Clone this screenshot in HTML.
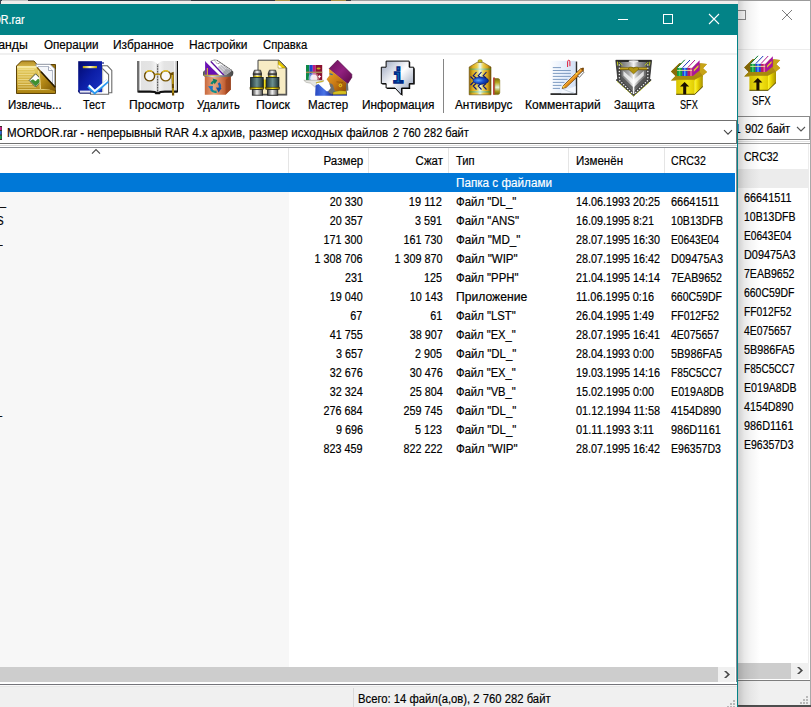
<!DOCTYPE html>
<html lang="ru">
<head>
<meta charset="utf-8">
<title>MORDOR.rar - WinRAR</title>
<style>
html,body{margin:0;padding:0}
body{width:811px;height:707px;overflow:hidden;position:relative;background:#fff;font:12px/14px 'Liberation Sans',sans-serif;color:#000}
div,svg{position:absolute;box-sizing:border-box}
.t{position:absolute;white-space:pre;font-size:12px;line-height:14px;display:block;-webkit-text-stroke-width:.18px}
#back{left:738px;top:0;width:73px;height:707px;background:#fff;overflow:hidden}
#back .t{margin-left:-738px}
#front{left:0;top:0;width:738px;height:707px;overflow:hidden}
#shadow{left:738px;top:1px;width:22px;height:705px;background:linear-gradient(90deg,rgba(0,0,0,.19),rgba(0,0,0,.09) 28%,rgba(0,0,0,.04) 58%,rgba(0,0,0,0))}
</style>
</head>
<body>
<!-- ================= background (inactive) WinRAR window ================= -->
<div id="back">
  <div style="left:0;top:0;width:73px;height:1px;background:#9b9b9b"></div>
  <div style="left:72px;top:0;width:1px;height:706px;background:#a8a8a8"></div>
  <!-- caption buttons -->
  <div style="left:-3px;top:10px;width:11px;height:10px;border:1px solid #8c8c8c"></div>
  <svg style="left:43px;top:9px" width="12" height="12" viewBox="0 0 12 12"><path d="M1 1L11 11M11 1L1 11" stroke="#7d7d7d" stroke-width="1" fill="none"/></svg>
  <div style="left:0;top:49px;width:72px;height:1px;background:#ededed"></div>
  <!-- address combo -->
  <div style="left:-4px;top:116px;width:76px;height:24px;border:1px solid #8a8a8a;background:#fff"></div>
  <svg style="left:58px;top:126px" width="10" height="6" viewBox="0 0 10 6"><path d="M1 1L5 5L9 1" stroke="#555" stroke-width="1.1" fill="none"/></svg>
  <div style="left:0;top:141px;width:72px;height:1px;background:#e2e2e2"></div>
  <div style="left:0;top:143px;width:72px;height:1px;background:#a6a6a6"></div>
  <!-- list -->
  <div style="left:0;top:169px;width:71px;height:19px;background:#ececec"></div>
  <div style="left:70px;top:144px;width:1px;height:519px;background:#ececec"></div>
  <!-- h scrollbar -->
  <div style="left:0;top:663px;width:71px;height:16px;background:#f0f0f0"></div>
  <div style="left:0;top:663px;width:53px;height:16px;background:#cdcdcd"></div>
  <svg style="left:57px;top:665px" width="10" height="12" viewBox="0 0 10 12"><path d="M2 2H4.2L8 5.5L4.2 9H2L5.6 5.5Z" fill="#484848"/></svg>
  <div style="left:0;top:680px;width:72px;height:1px;background:#7e7e7e"></div>
  <div style="left:0;top:681px;width:72px;height:24px;background:#f0f0f0"></div>
  <svg style="left:62px;top:696px" width="9" height="9" viewBox="0 0 9 9" fill="#b9b9b9"><rect x="6" y="0" width="2" height="2"/><rect x="3" y="3" width="2" height="2"/><rect x="6" y="3" width="2" height="2"/><rect x="0" y="6" width="2" height="2"/><rect x="3" y="6" width="2" height="2"/><rect x="6" y="6" width="2" height="2"/></svg>
  <div style="left:0;top:705px;width:73px;height:2px;background:#4e4e4e"></div>
<svg style="left:0;top:51px" width="73" height="45" viewBox="664.8 55 73 45"><g>
      <path d="M671 71.4 L679.4 63.2 L700.5 63.2 L707 64 L703 68.2 L707 72 L702.8 75.4 L694.8 80 L676.2 80 L671 80.4 L675.5 76 Z" fill="#b08c10"/>
      <path d="M671 71.4 L679.4 63.2 L684 63.2 L676.5 75.9 L675.5 76 Z" fill="#8a6c08"/>
      <path d="M700.5 63.4 L707 64 L703 68.2 L707 72 L702.8 75.4 L699.8 72 Z" fill="#c8a418"/>
      <!-- books -->
      <path d="M677.2 67.9 L684.8 59.8 L699.6 60.2 L692.2 67.9 Z" fill="#fff"/>
      <path d="M677.4 67.6 L684.8 59.8" stroke="#0a7a30" stroke-width="1"/>
      <path d="M682.6 67.6 L690 60" stroke="#1a38b8" stroke-width="1"/>
      <path d="M687.8 67.6 L695 60" stroke="#b0188a" stroke-width="1"/>
      <rect x="677.1" y="67.9" width="5.2" height="8.4" fill="#0c9a40"/>
      <rect x="678.8" y="67.9" width="1.6" height="8.4" fill="#50e080" opacity=".7"/>
      <rect x="682.3" y="67.9" width="5.4" height="8.4" fill="#2838e0"/>
      <rect x="684" y="67.9" width="1.6" height="8.4" fill="#40c8f8" opacity=".8"/>
      <rect x="687.7" y="67.9" width="4.5" height="8.4" fill="#b81868"/>
      <rect x="690.4" y="67.9" width="1.2" height="8.4" fill="#ff90d0" opacity=".8"/>
      <path d="M677.1 70.4 H692.2" stroke="#f0e8a0" stroke-width=".9"/>
      <path d="M692.2 67.9 L699.6 60.2 L699.6 70.4 L692.2 76.4 Z" fill="#a8149c"/>
      <path d="M693.8 69.8 L698.4 65 L698.4 67 L693.8 71.8 Z" fill="#e8d020"/>
      <!-- box -->
      <path d="M671 80.4 L675.5 75.9 L694.8 75.9 L702.8 75.2 L702.8 76.4 L694.8 80.6 Z" fill="#a88a0c"/>
      <rect x="676.2" y="79.8" width="18.6" height="14.8" fill="url(#gBoxF)"/>
      <path d="M694.8 79.8 L702.8 75.4 L702.8 86.8 L694.8 94.6 Z" fill="url(#gBoxS)"/>
      <path d="M676.2 94.3 H694.8 L702.8 86.6" fill="none" stroke="#4a3c00" stroke-width=".9"/>
      <path d="M684.6 82 L689.2 86.6 L686.2 86.6 L686.2 94.2 L683.2 94.2 L683.2 86.6 L680 86.6 Z" fill="#1a0e00"/>
    </g></svg>
<span class="t" style="left:752.2px;transform-origin:0 0;top:94.1px;transform:scaleX(0.8054)">SFX</span>
<span class="t" style="left:744.5px;transform-origin:0 0;top:121.5px;transform:scaleX(0.9257)">902 байт</span>
<span class="t" style="right:70.2px;transform-origin:100% 0;top:121.5px;transform:scaleX(0.9300)">1</span>
<span class="t" style="left:744.4px;transform-origin:0 0;top:150.0px;transform:scaleX(0.8740)">CRC32</span>
<span class="t" style="left:744.2px;transform-origin:0 0;top:191.1px;transform:scaleX(0.9048)">66641511</span>
<span class="t" style="left:744.2px;transform-origin:0 0;top:210.1px;transform:scaleX(0.8773)">10B13DFB</span>
<span class="t" style="left:744.2px;transform-origin:0 0;top:229.1px;transform:scaleX(0.8473)">E0643E04</span>
<span class="t" style="left:744.2px;transform-origin:0 0;top:248.1px;transform:scaleX(0.9080)">D09475A3</span>
<span class="t" style="left:744.2px;transform-origin:0 0;top:267.1px;transform:scaleX(0.8799)">7EAB9652</span>
<span class="t" style="left:744.2px;transform-origin:0 0;top:286.1px;transform:scaleX(0.8702)">660C59DF</span>
<span class="t" style="left:744.2px;transform-origin:0 0;top:305.1px;transform:scaleX(0.8580)">FF012F52</span>
<span class="t" style="left:744.2px;transform-origin:0 0;top:324.1px;transform:scaleX(0.8678)">4E075657</span>
<span class="t" style="left:744.2px;transform-origin:0 0;top:343.1px;transform:scaleX(0.9010)">5B986FA5</span>
<span class="t" style="left:744.2px;transform-origin:0 0;top:362.1px;transform:scaleX(0.8412)">F85C5CC7</span>
<span class="t" style="left:744.2px;transform-origin:0 0;top:381.1px;transform:scaleX(0.8842)">E019A8DB</span>
<span class="t" style="left:744.2px;transform-origin:0 0;top:400.1px;transform:scaleX(0.8937)">4154D890</span>
<span class="t" style="left:744.2px;transform-origin:0 0;top:419.1px;transform:scaleX(0.9083)">986D1161</span>
<span class="t" style="left:744.2px;transform-origin:0 0;top:438.1px;transform:scaleX(0.8727)">E96357D3</span>
</div>
<div id="shadow"></div>

<!-- ================= active WinRAR window ================= -->
<div id="front">
  <!-- strip of desktop above the window -->
  <div style="left:0;top:0;width:738px;height:1px;background:linear-gradient(90deg,#39424e 0,#39424e 2px,#c4c4c4 2px,#c4c4c4 28px,#2c2f38 28px,#2c2f38 170px,#85868c 170px,#85868c 191px,#30323a 191px,#30323a 275px,#a88c44 275px,#a88c44 290px,#2e3038 290px,#2e3038 331px,#a88c44 331px,#a88c44 346px,#34363c 346px,#34363c 351px,#a0a0a0 351px,#a0a0a0 100%)"></div>
  <div style="left:0;top:1px;width:738px;height:3px;background:#efeeec"></div>
  <div style="left:0;top:0;width:1px;height:4px;background:#3a4450"></div>
  <!-- title bar -->
  <div style="left:0;top:4px;width:738px;height:31px;background:#038387"></div>
  <svg style="left:600px;top:4px" width="138" height="31" viewBox="0 0 138 31" fill="none" stroke="#fff" stroke-width="1">
    <path d="M18 15.5H28"/><rect x="63.5" y="10.5" width="9" height="9"/><path d="M109 10L119 20M119 10L109 20" stroke-width="1.1"/>
  </svg>
  <!-- menu bar -->
  <div style="left:0;top:35px;width:737px;height:19px;background:#fff"></div>
  <div style="left:0;top:53px;width:737px;height:2px;background:#f0f0f0"></div>
  <!-- toolbar -->
  <div style="left:0;top:55px;width:737px;height:65px;background:#fff"></div>
  <div style="left:443px;top:59px;width:1px;height:54px;background:#858585"></div>
  <svg style="left:0;top:55px" width="738" height="45" viewBox="0 55 738 45">
    <defs>
      <linearGradient id="gFold" x1="0" y1="0" x2="0" y2="1"><stop offset="0" stop-color="#f6e89a"/><stop offset=".12" stop-color="#e2c85c"/><stop offset=".6" stop-color="#d2b040"/><stop offset="1" stop-color="#a9800f"/></linearGradient>
      <linearGradient id="gFoldTab" x1="0" y1="0" x2="0" y2="1"><stop offset="0" stop-color="#b8922a"/><stop offset="1" stop-color="#d8b848"/></linearGradient>
      <linearGradient id="gPeel" x1="0" y1="0" x2="1" y2="1"><stop offset="0" stop-color="#dcbc4c"/><stop offset=".45" stop-color="#b88c18"/><stop offset="1" stop-color="#7a5604"/></linearGradient>
      <linearGradient id="gBook" x1="0" y1="0" x2="1" y2="1"><stop offset="0" stop-color="#020a6e"/><stop offset=".5" stop-color="#0c1ea6"/><stop offset="1" stop-color="#1a34c4"/></linearGradient>
      <linearGradient id="gYbar" x1="0" y1="0" x2="1" y2="0"><stop offset="0" stop-color="#b8a000"/><stop offset=".5" stop-color="#fff8c0"/><stop offset="1" stop-color="#b8a000"/></linearGradient>
      <linearGradient id="gPageL" x1="0" y1="0" x2="1" y2="0"><stop offset="0" stop-color="#e2e2e2"/><stop offset=".6" stop-color="#e4e4e4"/><stop offset=".88" stop-color="#f2f2f2"/><stop offset="1" stop-color="#c8c8c8"/></linearGradient>
      <linearGradient id="gPageR" x1="0" y1="0" x2="1" y2="0"><stop offset="0" stop-color="#c8c8c8"/><stop offset=".12" stop-color="#f2f2f2"/><stop offset=".4" stop-color="#e4e4e4"/><stop offset="1" stop-color="#e2e2e2"/></linearGradient>
      <linearGradient id="gBin" x1="0" y1="0" x2="1" y2="0"><stop offset="0" stop-color="#c8683c"/><stop offset=".35" stop-color="#e9a882"/><stop offset=".8" stop-color="#c05c30"/><stop offset="1" stop-color="#8e3c18"/></linearGradient>
      <linearGradient id="gRim" x1="0" y1="0" x2="1" y2="0"><stop offset="0" stop-color="#4e4e4e"/><stop offset=".3" stop-color="#d8d8d8"/><stop offset=".6" stop-color="#8a8a8a"/><stop offset="1" stop-color="#444"/></linearGradient>
      <linearGradient id="gSilverH" x1="0" y1="0" x2="1" y2="0"><stop offset="0" stop-color="#3c3c3c"/><stop offset=".45" stop-color="#f4f4f4"/><stop offset="1" stop-color="#4a4a4a"/></linearGradient>
      <linearGradient id="gBino" x1="0" y1="0" x2="1" y2="0"><stop offset="0" stop-color="#22363a"/><stop offset=".5" stop-color="#6c9090"/><stop offset="1" stop-color="#1e3032"/></linearGradient>
      <linearGradient id="gRing" x1="0" y1="0" x2="1" y2="0"><stop offset="0" stop-color="#7a6400"/><stop offset=".5" stop-color="#ffee20"/><stop offset="1" stop-color="#7a6400"/></linearGradient>
      <linearGradient id="gBubble" x1="0" y1="0" x2="1" y2="1"><stop offset="0" stop-color="#98a2b8"/><stop offset=".22" stop-color="#c8cedc"/><stop offset=".48" stop-color="#fff"/><stop offset=".75" stop-color="#bcc4d4"/><stop offset="1" stop-color="#7c88a4"/></linearGradient>
      <linearGradient id="gInfo" x1="0" y1="0" x2="1" y2="0"><stop offset="0" stop-color="#002a8c"/><stop offset=".3" stop-color="#003a9c"/><stop offset=".5" stop-color="#168ac8"/><stop offset=".7" stop-color="#003a9c"/><stop offset="1" stop-color="#00247a"/></linearGradient>
      <linearGradient id="gCan" x1="0" y1="0" x2="1" y2="0"><stop offset="0" stop-color="#946808"/><stop offset=".16" stop-color="#dcac1c"/><stop offset=".36" stop-color="#ecd050"/><stop offset=".5" stop-color="#e4fafa"/><stop offset=".64" stop-color="#ecd050"/><stop offset=".84" stop-color="#d4a018"/><stop offset="1" stop-color="#765004"/></linearGradient>
      <linearGradient id="gCanG" x1="0" y1="0" x2="1" y2="0"><stop offset="0" stop-color="#6a8a10"/><stop offset=".5" stop-color="#c8f0e0"/><stop offset="1" stop-color="#5a7a08"/></linearGradient>
      <linearGradient id="gCap" x1="0" y1="0" x2="0" y2="1"><stop offset="0" stop-color="#7a6a08"/><stop offset=".25" stop-color="#b8a820"/><stop offset=".55" stop-color="#e4f6dc"/><stop offset=".8" stop-color="#a89818"/><stop offset="1" stop-color="#6a5c04"/></linearGradient>
      <radialGradient id="gBug" cx=".35" cy=".45" r=".7"><stop offset="0" stop-color="#58a8ff"/><stop offset=".5" stop-color="#1448c8"/><stop offset="1" stop-color="#06207a"/></radialGradient>
      <linearGradient id="gNote" x1="0" y1="0" x2="1" y2="0"><stop offset="0" stop-color="#fff"/><stop offset=".5" stop-color="#e8f0fc"/><stop offset="1" stop-color="#d2e0f6"/></linearGradient>
      <linearGradient id="gShield" x1="0" y1="0" x2="1" y2="0"><stop offset="0" stop-color="#747474"/><stop offset=".3" stop-color="#a8a8a8"/><stop offset=".5" stop-color="#f4f4f4"/><stop offset=".7" stop-color="#9c9c9c"/><stop offset="1" stop-color="#686868"/></linearGradient>
      <linearGradient id="gTurban" x1="0" y1="0" x2="1" y2="1"><stop offset="0" stop-color="#6a1058"/><stop offset=".5" stop-color="#922080"/><stop offset="1" stop-color="#5a0848"/></linearGradient>
      <linearGradient id="gFace" x1="0" y1="0" x2="1" y2="1"><stop offset="0" stop-color="#eca830"/><stop offset=".5" stop-color="#cc7c14"/><stop offset="1" stop-color="#8c4804"/></linearGradient>
      <linearGradient id="gArm" x1="0" y1="0" x2="1" y2="0"><stop offset="0" stop-color="#2848c0"/><stop offset=".5" stop-color="#4a74e8"/><stop offset="1" stop-color="#10208a"/></linearGradient>
      <linearGradient id="gBoxF" x1="0" y1="0" x2="1" y2="0"><stop offset="0" stop-color="#d8c400"/><stop offset=".6" stop-color="#f2e418"/><stop offset="1" stop-color="#e0cc00"/></linearGradient>
      <linearGradient id="gBoxS" x1="0" y1="0" x2="1" y2="0"><stop offset="0" stop-color="#fff830"/><stop offset=".4" stop-color="#e4d000"/><stop offset="1" stop-color="#a89000"/></linearGradient>
    </defs>

    <!-- 1: Extract -->
    <g>
      <path d="M16.5 67 L16.5 66 L21.5 61 L34 61 L37 64.5 L55.5 64.5 L55.5 93.5 L16.5 93.5 Z" fill="#9a7410" stroke="#5e4408" stroke-width="1"/>
      <path d="M17 66.3 L21.7 61.5 L33.8 61.5 L36.5 64.8 L36.5 67 L17 67 Z" fill="url(#gFoldTab)"/>
      <path d="M36 64.3 L50 64.3 L54.8 69 L54.8 90 L36 90 Z" fill="#fff" stroke="#8d96aa" stroke-width=".9"/>
      <path d="M38 66.5 L48.5 66.5 L52.5 70.5 L52.5 88 L38 88 Z" fill="#f4f6fa" stroke="#a0a8ba" stroke-width=".8"/>
      <path d="M48.5 66.5 L48.5 70.5 L52.5 70.5" fill="#fff" stroke="#8d96aa" stroke-width=".8"/>
      <path d="M17 66.6 L36.3 66.6 L55 87 L55 93 L17 93 Z" fill="url(#gFold)"/>
      <g stroke="#f2e29a" stroke-width=".9" opacity=".8"><path d="M18 69.5H34M18 72H35M18 74.5H33M18 77H31M18 79.5H30M18 82H30M18 84.5H32M18 87H36M18 89.5H50"/></g>
      <path d="M35.6 73.8 L42.2 80.4 L35.6 87 L29.2 80.4 Z" fill="#fff" stroke="#3c4a3c" stroke-width=".9"/>
      <path d="M30.2 80.8 L33 79.3 L35.5 81.3 L38 78.8 L41.4 80.4 L35.6 86.3 Z" fill="#3f9030"/>
      <path d="M36.3 66.6 L55 87 L55 91.2 C50 89.6 45 88.6 40.4 89.2 C40.2 82 39.6 73 36.3 66.6 Z" fill="url(#gPeel)"/>
      <path d="M38.4 70.5 C39.8 76 40.2 83 40.4 89" stroke="#f6e9a8" stroke-width="1" fill="none" opacity=".9"/>
      <path d="M37 67.4 L55.2 87.3" stroke="#7a5808" stroke-width="1.2" fill="none"/>
      <path d="M41 71.8 L55.2 87.3" stroke="#241800" stroke-width="1.5" fill="none"/>
      <path d="M17 66.9H36" stroke="#fff6c0" stroke-width="1"/>
    </g>

    <!-- 2: Test -->
    <g>
      <path d="M102 65.8 L107.5 65.8 L111.8 70.5 L111.8 92.8 L102 92.8 Z" fill="#fff" stroke="#6a6a6a" stroke-width="1.1"/>
      <path d="M103 64 L103 62" stroke="#0a1480" stroke-width="1.2"/>
      <path d="M90.5 69 L103 69 L108.6 74.5 L108.6 94.3 L90.5 94.3 Z" fill="#fff" stroke="#6a6a6a" stroke-width="1.1"/>
      <path d="M102.5 69.5 L102.5 92" stroke="#9a9a9a" stroke-width="1.4" opacity=".6"/>
      <rect x="78.2" y="61.2" width="23.8" height="31" fill="url(#gBook)"/>
      <path d="M79.8 90.6 L90.4 90.6 L90.4 92.6 L79.8 92.6 Z" fill="#e8e8f4"/>
      <path d="M78.4 90.4 L79.6 93.2 L90.4 93.2" fill="none" stroke="#060c60" stroke-width="1"/>
      <rect x="82.8" y="66" width="14.2" height="2.2" fill="url(#gYbar)"/>
      <path d="M88.5 86 L94.7 92.3 L107.8 80.8" fill="none" stroke="#2a9af0" stroke-width="3.6" stroke-linejoin="miter"/>
      <path d="M88.9 85.2 L94.8 91 L107.3 80.2" fill="none" stroke="#fff" stroke-width="1.9"/>
    </g>

    <!-- 3: View -->
    <g>
      <path d="M138 61 L138 92 L150 92 C154 92 155.5 93 155.8 93.6 L159.4 93.6 C159.8 93 161.5 92 165 92 L177.4 92 L177.4 61" fill="#fff" stroke="#111" stroke-width="1.2"/>
      <path d="M139.6 61 V91 M175.9 61 V91" stroke="#8c8c8c" stroke-width=".6"/>
      <path d="M141 61 L152 61 C155 61.5 157 63 157.6 65 L157.6 92 C156 91 153 90.6 150 90.6 L141 90.6 Z" fill="url(#gPageL)"/>
      <path d="M174.4 61 L163 61 C160 61.5 158.2 63 157.6 65 L157.6 92 C159 91 162 90.6 165 90.6 L174.4 90.6 Z" fill="url(#gPageR)"/>
      <path d="M138.3 91.4 L150 91.4 C154 91.4 156 92 156.2 92.8 L159 92.8 C159.2 92 161.5 91.4 165 91.4 L177 91.4" fill="none" stroke="#111" stroke-width="2"/>
      <path d="M157.6 64.5V92" stroke="#555" stroke-width="1.2" stroke-dasharray="1 .6"/>
      <circle cx="149.6" cy="75.9" r="5" fill="#f8f8f8" stroke="#6a4a04" stroke-width="1.4"/>
      <circle cx="165.7" cy="75.9" r="5" fill="#f8f8f8" stroke="#7a5806" stroke-width="1.4"/>
      <path d="M146 72.4 A5 5 0 0 1 152.4 71.8 M162.2 72.4 A5 5 0 0 1 168.6 71.8" fill="none" stroke="#e8c41c" stroke-width="1.2"/>
      <path d="M154.6 74.8 Q157.6 73.4 160.8 74.8" fill="none" stroke="#b08a0a" stroke-width="1.5"/>
      <path d="M170.4 74.2 L172.6 73.4 L173.1 95.6" fill="none" stroke="#6e4e02" stroke-width="2.2"/>
      <path d="M172.6 75 L172.9 84 M173 88 L173.1 93" fill="none" stroke="#e8c41c" stroke-width=".9"/>
    </g>

    <!-- 4: Delete -->
    <g>
      <path d="M203 73.4 C203 70.6 206 69.6 209 69.4 L228 69.2 C231.4 69.4 233.2 70.8 233.2 72.8 L233.2 74 C233 75.6 231.6 76.6 230 76.8 L206 76.8 C204 76.6 203 75.4 203 73.4 Z" fill="url(#gRim)"/>
      <path d="M204.8 75.5 L230.8 75.5 L230.8 89.5 L225.6 94.8 L204.8 94.8 Z" fill="url(#gBin)"/>
      <path d="M230.8 76 L230.8 89.5 L225.6 94.8 L225.6 80 Z" fill="#9c4420" opacity=".75"/>
      <path d="M205.1 61.1 L205.1 75.2 L219.2 75.2 Z" fill="#6a10b4"/>
      <path d="M207.3 68 L207.3 75" stroke="#e8d020" stroke-width="1"/>
      <path d="M210.6 61.2 L214.6 59.8 L217 60.3 L232 70.5 L224.5 76 L210.6 61.2 Z" fill="#fff" stroke="#666" stroke-width=".6"/>
      <path d="M214.5 60.5 L217.5 64 L221 62.5" fill="none" stroke="#555" stroke-width=".7" stroke-dasharray="1 .7"/>
      <path d="M220.5 64.5 L231.6 70.6 L225 75.6 L217.5 67.5 Z" fill="#d6d6da"/>
      <path d="M226 69 L231.8 70.6 L225.2 75.8 L222.4 73 Z" fill="#a9a9ae"/>
      <path d="M219 66.5 L226.5 74 M221 65.5 L228.5 72.8 M223 64.8 L230 71.5" stroke="#8e8e9a" stroke-width=".6"/>
      <path d="M217 60.3 L232 70.5" stroke="#444" stroke-width=".8" stroke-dasharray="1.2 .9"/>
      <path d="M205.6 61.4 L210.8 61.5 L224.6 76 L219.6 75.4 Z" fill="#fff"/>
      <path d="M210.8 61.5 L224.6 76" stroke="#5a0ea0" stroke-width="1.2"/>
      <path d="M203 73 C203.4 71.2 204.6 70.6 205.3 70.6 L205.3 75.2 L224.2 75.2 C228 75 231.5 73 233 70.8 C233.6 72.6 233.2 75.4 231 76.6 C225 77.6 210 77.6 204.8 76.6 C203.4 76 202.8 74.6 203 73 Z" fill="url(#gRim)"/>
      <path d="M204 75.2H219" stroke="#d8c020" stroke-width=".8"/>
      <g fill="none" stroke-width="2.3">
        <path d="M211.4 84 A5 5 0 0 1 216.4 81.2" stroke="#0e8a72"/>
        <path d="M218.6 83 A5.2 5.2 0 0 1 218.8 89.6" stroke="#1465b4"/>
        <path d="M216.6 91.6 A5.2 5.2 0 0 1 211 89.4" stroke="#0f8f8a"/>
      </g>
      <path d="M212.6 78.4 L217.4 80 L214.6 84.4 Z" fill="#0c7a5e"/>
      <path d="M216 87.4 L221.6 88 L218.6 92.6 Z" fill="#10509c"/>
      <path d="M208 86.2 L213 86 L212.2 91.4 Z" fill="#1a78c8"/>
    </g>

    <!-- 5: Find -->
    <g>
      <path d="M258 60.2 L279 60.2 L286.4 67.5 L286.4 94.6 L258 94.6 Z" fill="#f7ecc4" stroke="#444" stroke-width="1"/>
      <path d="M286.4 68 L286.4 94.6 L262 94.6" fill="none" stroke="#555" stroke-width="1.6"/>
      <path d="M278.2 60.5 L286 68 L278.2 68 Z" fill="#f0d000" stroke="#5a4a00" stroke-width=".5"/>
      <path d="M278.4 64.5 L278.4 67.8 L282 67.8 Z" fill="#fff"/>
      <rect x="263" y="79.5" width="3.4" height="9" fill="url(#gRing)"/>
      <!-- left barrel -->
      <path d="M254.4 70.2 H260.6 L261.4 72.8 V76.6 H253.4 V72.8 Z" fill="url(#gSilverH)" stroke="#1c1c1c" stroke-width=".7"/>
      <rect x="252.8" y="73.2" width="9.2" height="1.8" fill="#2a2a2a" opacity=".8"/>
      <rect x="253" y="75.8" width="8.8" height="1.8" fill="url(#gRing)"/>
      <rect x="250.6" y="77.4" width="12.6" height="10.4" fill="url(#gBino)" stroke="#101a1c" stroke-width=".8"/>
      <rect x="250" y="87.2" width="13.6" height="2.3" fill="url(#gRing)" stroke="#2a2200" stroke-width=".5"/>
      <rect x="252.3" y="89.6" width="10.2" height="5.6" fill="url(#gSilverH)" stroke="#1c1c1c" stroke-width=".8"/>
      <!-- right barrel -->
      <path d="M269.4 70.2 H275.6 L276.4 72.8 V76.6 H268.4 V72.8 Z" fill="url(#gSilverH)" stroke="#1c1c1c" stroke-width=".7"/>
      <rect x="267.8" y="73.2" width="9.2" height="1.8" fill="#2a2a2a" opacity=".8"/>
      <rect x="268.2" y="75.8" width="8.4" height="1.8" fill="url(#gRing)"/>
      <rect x="266.3" y="77.4" width="12.6" height="10.4" fill="url(#gBino)" stroke="#101a1c" stroke-width=".8"/>
      <rect x="265.8" y="87.2" width="13.6" height="2.3" fill="url(#gRing)" stroke="#2a2200" stroke-width=".5"/>
      <rect x="267.6" y="89.6" width="10.2" height="5.6" fill="url(#gSilverH)" stroke="#1c1c1c" stroke-width=".8"/>
    </g>

    <!-- 6: Wizard -->
    <g>
      <rect x="306" y="65" width="3.4" height="15.2" fill="#0c8a48"/>
      <rect x="309.4" y="65" width="3.4" height="15.2" fill="#1c44c8"/>
      <rect x="312.8" y="65" width="2.6" height="15.2" fill="#c01884"/>
      <rect x="315.4" y="65" width="6.8" height="15.2" fill="#8a1030"/>
      <rect x="306" y="71.6" width="16.2" height="1.5" fill="#a88858"/>
      <ellipse cx="318.6" cy="68.5" rx="2" ry=".9" fill="#c8b020"/>
      <circle cx="313.8" cy="78.2" r="3.6" fill="#fff" opacity=".85"/>
      <circle cx="313.8" cy="78.2" r="5.5" fill="#fff" opacity=".35"/>
      <path d="M319.6 74.8 L320.2 76 L321.4 76.6 L320.2 77.2 L319.6 78.4 L319 77.2 L317.8 76.6 L319 76 Z" fill="#fff"/>
      <path d="M303.8 80.3 L323.8 80.3 L322.5 82 L316 82.6 L317.8 86.5 L314.5 86.8 L310.5 83.2 L306 82.3 Z" fill="#e4e4e0" stroke="#9a9a90" stroke-width=".5"/>
      <path d="M316 82.2 L323.6 80.6 L323.6 81.6 L316.4 83.2 Z" fill="#c8b428"/>
      <path d="M315.2 94.5 L315.6 85.5 L318.4 84 L326.5 91.2 L333 91.2 L333 95.7 L315.2 95.7 Z" fill="url(#gArm)"/>
      <path d="M333 91.4 L347 91.4 L347 95.7 L333 95.7 Z" fill="#2038b0"/>
      <path d="M329 68.8 L337.6 60.1 L351.8 74.3 L351.8 77.4 L347.7 83.8 Z" fill="url(#gTurban)" stroke="#4a0a40" stroke-width=".6"/>
      <path d="M329 68.8 L347.5 83.8 L345.8 91.2 L333.4 91.2 L330.6 86.8 L329.7 83.6 L326.6 79.2 L329.4 75.6 Z" fill="url(#gFace)"/>
      <path d="M329.6 73.8 L332.6 74.6" stroke="#1c6cb0" stroke-width="1.1"/>
      <path d="M329.2 83.4 C330.8 83.2 332.2 84 333 85.2 L335.2 92 L332 94.6 L329 92.8 L328 91.2 L330.8 88 Z" fill="#6e6e6e"/>
      <path d="M346 83 L348 84 L348.4 90.6 L346 91 Z" fill="#6e6e6e"/>
      <path d="M333 92.3 C337 90.5 342 90.2 346.4 91.2 L346.6 94.2 L333 94.4 Z" fill="#d8c020" stroke="#7a6800" stroke-width=".4"/>
      <circle cx="340.4" cy="85.4" r="1.3" fill="none" stroke="#f0e020" stroke-width=".9"/>
      <path d="M336.5 81.8 L343 82.6" stroke="#8a5008" stroke-width=".7"/>
    </g>

    <!-- 7: Info -->
    <g>
      <path d="M387.1 62.1 H410.2 V68.2 H414.7 V84.6 H410.2 V89 H402.5 V96 L396 89 H387.1 V84.6 H382.3 V68.2 H387.1 Z" fill="#000"/>
      <path d="M386.1 61.1 H409.2 V67.2 H413.7 V83.6 H409.2 V88 H401.5 V95 L395 88 H386.1 V83.6 H381.3 V67.2 H386.1 Z" fill="url(#gBubble)" stroke="#0a0a0a" stroke-width="1"/>
      <text x="398.6" y="83.2" text-anchor="middle" font-family="'DejaVu Sans Mono', monospace" font-weight="bold" font-size="19" fill="url(#gInfo)" stroke="#002a86" stroke-width="1.5" transform="translate(397.9 0) scale(.96 1) translate(-398.6 0)">i</text>
    </g>

    <!-- 8: Antivirus -->
    <g>
      <rect x="478" y="59.8" width="4.2" height="3" rx="1.2" fill="#c8c018" stroke="#6a6200" stroke-width=".5"/>
      <path d="M469.2 94.8 L469.2 67 L477 62.4 L483.2 62.4 L491 67 L491 94.8 Z" fill="url(#gCan)" stroke="#6a4c06" stroke-width=".6"/>
      <rect x="469.4" y="68.4" width="21.4" height="1.7" fill="url(#gCanG)"/>
      <rect x="469.4" y="91" width="21.4" height="1.7" fill="url(#gCanG)"/>
      <g stroke="#0c1478" stroke-width="1.1" fill="none">
        <path d="M476.5 72 L473.2 75.6 L476 78 M481.5 72 L478.2 75.6 L481 78 M486.5 72 L483.2 75.6 L486 78"/>
        <path d="M476.5 89.5 L473.2 86 L476 83.5 M481.5 89.5 L478.2 86 L481 83.5 M486.5 89.5 L483.2 86 L486 83.5"/>
        <path d="M470.5 76.5 L473.5 79.5 M470.5 85 L473.5 82"/>
      </g>
      <ellipse cx="480.8" cy="80.7" rx="7.8" ry="3.7" fill="url(#gBug)" stroke="#081460" stroke-width=".5"/>
      <rect x="493.2" y="77.5" width="1.6" height="17.3" fill="#b01818"/>
      <path d="M494.8 78.5 L498 78.5 Q499.8 78.5 499.8 80.5 L499.8 92.5 Q499.8 94.6 498 94.6 L494.8 94.6 Z" fill="url(#gCap)" stroke="#7a6a08" stroke-width=".5"/>
    </g>

    <!-- 9: Comment -->
    <g>
      <path d="M576.3 61.5 L576.3 94 L550.5 94" fill="none" stroke="#2c2c2c" stroke-width="1.8"/>
      <rect x="549" y="60.8" width="26.6" height="32.4" fill="url(#gNote)"/>
      <path d="M561 93.2 L575.6 93.2 L575.6 86 C571 88 566 90 562.5 88.6 Z" fill="#f4f8ff"/>
      <path d="M562.5 88.8 C566 90.4 570 92.2 574 93" stroke="#a8b8c8" stroke-width=".6" fill="none"/>
      <g stroke="#7f9cc2" stroke-width="1">
        <path d="M552.8 67.6H561M552.8 70.5H570.8M552.8 73.4H570.8M552.8 76.4H570.8M552.8 79.4H567.5M552.8 82.4H564.5M552.8 85.4H561.5M552.8 88.4H560"/>
      </g>
      <path d="M567.6 67 L567.6 61.8 Q567.6 60.2 568.8 60.2 Q569.9 60.2 569.9 61.8 L569.9 66.2" fill="none" stroke="#e0203c" stroke-width="1"/>
      <path d="M562.2 88.5 L563.4 85.6 L580.8 68.4 L583.6 71 L566 87.6 Z" fill="#e48c14" stroke="#6a3c04" stroke-width=".7"/>
      <path d="M564 86.2 L581.2 69.6" stroke="#ffc860" stroke-width=".8"/>
      <path d="M580.6 68.6 L583.2 67.4 L584 68.4 L583.4 71.2 Z" fill="#7a4808"/>
      <path d="M577.6 75.8 L582.6 71.2 L583.8 72.4 L579.4 77.4 Z" fill="#fff" stroke="#333" stroke-width=".7"/>
      <circle cx="563.6" cy="86.8" r=".9" fill="#ffe040"/>
      <circle cx="576.4" cy="73.6" r=".9" fill="#ffe040"/>
    </g>

    <!-- 10: Protect -->
    <g>
      <path d="M615.8 60.3 L651.6 60.3 L649.6 79 L651.2 80 L633.6 96 L616.2 80 L617.8 79 Z" fill="#484848" stroke="#141414" stroke-width=".7"/>
      <path d="M621.2 62 L646.2 62 L646 79.6 L633.6 91.4 L621.4 79.6 Z" fill="url(#gShield)"/>
      <path d="M621.3 76 L633.6 87.4 L646 76 L646 79.8 L633.6 91.6 L621.3 79.8 Z" fill="#4e4e4e" opacity=".8"/>
      <path d="M623.4 71 L633.6 80 L643.8 71 L643.8 75.4 L633.6 85 L623.4 75.4 Z" fill="#fff" opacity=".75"/>
      <path d="M633.6 70 L633.6 94" stroke="#fff" stroke-width="1.5" opacity=".95"/>
      <path d="M616.4 61 L651 61" stroke="#242424" stroke-width="1.6"/>
      <path d="M621.4 62.4 L646 62.4 L646 67 L621.4 67 Z" fill="url(#gShield)" opacity=".9"/>
      <ellipse cx="633.6" cy="61.2" rx="5" ry="1" fill="#fff" opacity=".9"/>
      <rect x="619.8" y="67.6" width="27.6" height="2.3" fill="#a8860a" stroke="#4a3a00" stroke-width=".45"/>
      <path d="M620.4 68.2 H647" stroke="#e0c840" stroke-width=".6"/>
      <path d="M633.6 74 L628.8 69.4 C627.8 67.2 631 66 633.6 68.2 C636.2 66 639.4 67.2 638.4 69.4 Z" fill="#b09410" stroke="#4a3a00" stroke-width=".45"/>
      <g fill="#f4f4f4"><circle cx="619.4" cy="65.0" r=".75"/><circle cx="647.8" cy="65.0" r=".75"/><circle cx="619.4" cy="68.2" r=".75"/><circle cx="647.8" cy="68.2" r=".75"/><circle cx="619.4" cy="71.4" r=".75"/><circle cx="647.8" cy="71.4" r=".75"/><circle cx="619.4" cy="74.6" r=".75"/><circle cx="647.8" cy="74.6" r=".75"/><circle cx="619.4" cy="77.8" r=".75"/><circle cx="647.8" cy="77.8" r=".75"/><circle cx="619.8" cy="80.8" r=".75"/><circle cx="647.4" cy="80.8" r=".75"/><circle cx="621.8" cy="82.8" r=".75"/><circle cx="645.4" cy="82.8" r=".75"/><circle cx="623.7" cy="84.7" r=".75"/><circle cx="643.5" cy="84.7" r=".75"/><circle cx="625.6" cy="86.6" r=".75"/><circle cx="641.5" cy="86.6" r=".75"/><circle cx="627.6" cy="88.6" r=".75"/><circle cx="639.6" cy="88.6" r=".75"/><circle cx="629.5" cy="90.5" r=".75"/><circle cx="637.6" cy="90.5" r=".75"/><circle cx="631.5" cy="92.5" r=".75"/><circle cx="635.7" cy="92.5" r=".75"/></g>
      <path d="M617.4 61.6 L617.8 65.6 M649.9 61.6 L649.5 65.6 M619.4 62.2 L622.6 65.4 M648 62.2 L644.8 65.4" stroke="#c8d818" stroke-width=".9"/>
      <path d="M617 81.4 L633.6 96.2 L650.4 81.4" fill="none" stroke="#d0d820" stroke-width=".8" stroke-dasharray="2 1.4"/>
    </g>

    <!-- 11: SFX -->
    <g id="sfxicon">
      <path d="M671 71.4 L679.4 63.2 L700.5 63.2 L707 64 L703 68.2 L707 72 L702.8 75.4 L694.8 80 L676.2 80 L671 80.4 L675.5 76 Z" fill="#b08c10"/>
      <path d="M671 71.4 L679.4 63.2 L684 63.2 L676.5 75.9 L675.5 76 Z" fill="#8a6c08"/>
      <path d="M700.5 63.4 L707 64 L703 68.2 L707 72 L702.8 75.4 L699.8 72 Z" fill="#c8a418"/>
      <!-- books -->
      <path d="M677.2 67.9 L684.8 59.8 L699.6 60.2 L692.2 67.9 Z" fill="#fff"/>
      <path d="M677.4 67.6 L684.8 59.8" stroke="#0a7a30" stroke-width="1"/>
      <path d="M682.6 67.6 L690 60" stroke="#1a38b8" stroke-width="1"/>
      <path d="M687.8 67.6 L695 60" stroke="#b0188a" stroke-width="1"/>
      <rect x="677.1" y="67.9" width="5.2" height="8.4" fill="#0c9a40"/>
      <rect x="678.8" y="67.9" width="1.6" height="8.4" fill="#50e080" opacity=".7"/>
      <rect x="682.3" y="67.9" width="5.4" height="8.4" fill="#2838e0"/>
      <rect x="684" y="67.9" width="1.6" height="8.4" fill="#40c8f8" opacity=".8"/>
      <rect x="687.7" y="67.9" width="4.5" height="8.4" fill="#b81868"/>
      <rect x="690.4" y="67.9" width="1.2" height="8.4" fill="#ff90d0" opacity=".8"/>
      <path d="M677.1 70.4 H692.2" stroke="#f0e8a0" stroke-width=".9"/>
      <path d="M692.2 67.9 L699.6 60.2 L699.6 70.4 L692.2 76.4 Z" fill="#a8149c"/>
      <path d="M693.8 69.8 L698.4 65 L698.4 67 L693.8 71.8 Z" fill="#e8d020"/>
      <!-- box -->
      <path d="M671 80.4 L675.5 75.9 L694.8 75.9 L702.8 75.2 L702.8 76.4 L694.8 80.6 Z" fill="#a88a0c"/>
      <rect x="676.2" y="79.8" width="18.6" height="14.8" fill="url(#gBoxF)"/>
      <path d="M694.8 79.8 L702.8 75.4 L702.8 86.8 L694.8 94.6 Z" fill="url(#gBoxS)"/>
      <path d="M676.2 94.3 H694.8 L702.8 86.6" fill="none" stroke="#4a3c00" stroke-width=".9"/>
      <path d="M684.6 82 L689.2 86.6 L686.2 86.6 L686.2 94.2 L683.2 94.2 L683.2 86.6 L680 86.6 Z" fill="#1a0e00"/>
    </g>
  </svg>

  <!-- address combo -->
  <div style="left:-2px;top:120px;width:739px;height:24px;border:1px solid #707070;background:#fff"></div>
  <svg style="left:0;top:126px" width="3" height="14" viewBox="0 0 3 14"><rect x="0" y="0" width="2" height="14" fill="#3a2a2a"/><rect x="0" y="1" width="1.6" height="3" fill="#d0208a"/><rect x="0" y="5" width="1.6" height="3.5" fill="#2a6ad0"/><rect x="0" y="9.5" width="1.6" height="3.5" fill="#10a050"/></svg>
  <svg style="left:723px;top:129px" width="10" height="7" viewBox="0 0 10 7"><path d="M1 1.2L5 5.2L9 1.2" stroke="#444" stroke-width="1.1" fill="none"/></svg>
  <div style="left:0;top:145px;width:737px;height:1px;background:#dcdcdc"></div>
  <div style="left:0;top:147px;width:737px;height:1px;background:#8a8d94"></div>
  <!-- list view -->
  <div style="left:0;top:148px;width:735px;height:519px;background:#fff"></div>
  <div style="left:736px;top:147px;width:1px;height:538px;background:#868992"></div>
  <div style="left:0;top:192px;width:289px;height:475px;background:#f7f7f7"></div>
  <div style="left:288px;top:148px;width:1px;height:25px;background:#e5e5e5"></div>
  <div style="left:368px;top:148px;width:1px;height:25px;background:#e5e5e5"></div>
  <div style="left:448px;top:148px;width:1px;height:25px;background:#e5e5e5"></div>
  <div style="left:568px;top:148px;width:1px;height:25px;background:#e5e5e5"></div>
  <div style="left:664px;top:148px;width:1px;height:25px;background:#e5e5e5"></div>
  <svg style="left:91px;top:148px" width="10" height="7" viewBox="0 0 10 7"><path d="M1 5.6L5 1.6L9 5.6" stroke="#4a4a4a" stroke-width="1.15" fill="none"/></svg>
  <div style="left:0;top:173px;width:735px;height:19px;background:#0078d7"></div>
  <!-- h scrollbar -->
  <div style="left:0;top:667px;width:735px;height:16px;background:#f0f0f0"></div>
  <div style="left:0;top:667px;width:718px;height:15px;background:#cdcdcd"></div>
  <svg style="left:722px;top:669px" width="10" height="12" viewBox="0 0 10 12"><path d="M2 2H4.2L8 5.5L4.2 9H2L5.6 5.5Z" fill="#484848"/></svg>
  <div style="left:0;top:682px;width:737px;height:2px;background:#fff"></div>
  <!-- status bar -->
  <div style="left:0;top:684px;width:737px;height:1px;background:#74747a"></div>
  <div style="left:0;top:685px;width:737px;height:22px;background:#f0f0f0"></div>
  <div style="left:0;top:685px;width:737px;height:1px;background:#f9f9f9"></div>
  <div style="left:0;top:686px;width:737px;height:1px;background:#e6e6e6"></div>
  <div style="left:353px;top:688px;width:1px;height:19px;background:#d9d9d9"></div>
  <svg style="left:727px;top:700px" width="9" height="9" viewBox="0 0 9 9" fill="#b9b9b9"><rect x="6" y="0" width="2" height="2"/><rect x="3" y="3" width="2" height="2"/><rect x="6" y="3" width="2" height="2"/><rect x="0" y="6" width="2" height="2"/><rect x="3" y="6" width="2" height="2"/><rect x="6" y="6" width="2" height="2"/></svg>
  <!-- window border -->
  <div style="left:737px;top:4px;width:1px;height:703px;background:#038387"></div>
<span class="t" style="right:713.1px;transform-origin:100% 0;top:13.1px;color:#fff;transform:scaleX(0.8944)">MORDOR.rar</span>
<span class="t" style="right:709.8px;transform-origin:100% 0;top:37.8px;transform:scaleX(1.0227)">Команды</span>
<span class="t" style="left:43.8px;transform-origin:0 0;top:37.8px;transform:scaleX(0.9690)">Операции</span>
<span class="t" style="left:113.3px;transform-origin:0 0;top:37.8px;transform:scaleX(0.9979)">Избранное</span>
<span class="t" style="left:188.8px;transform-origin:0 0;top:37.8px;transform:scaleX(0.9942)">Настройки</span>
<span class="t" style="left:262.7px;transform-origin:0 0;top:37.8px;transform:scaleX(0.9410)">Справка</span>
<span class="t" style="left:7.7px;transform-origin:0 0;top:98.0px;transform:scaleX(0.9587)">Извлечь...</span>
<span class="t" style="left:83.3px;transform-origin:0 0;top:98.0px;transform:scaleX(0.9062)">Тест</span>
<span class="t" style="left:129.0px;transform-origin:0 0;top:98.0px;transform:scaleX(1.0089)">Просмотр</span>
<span class="t" style="left:196.8px;transform-origin:0 0;top:98.0px;transform:scaleX(0.9339)">Удалить</span>
<span class="t" style="left:255.9px;transform-origin:0 0;top:98.0px;transform:scaleX(1.0221)">Поиск</span>
<span class="t" style="left:307.5px;transform-origin:0 0;top:98.0px;transform:scaleX(0.9659)">Мастер</span>
<span class="t" style="left:362.2px;transform-origin:0 0;top:98.0px;transform:scaleX(0.9852)">Информация</span>
<span class="t" style="left:455.0px;transform-origin:0 0;top:98.0px;transform:scaleX(0.9826)">Антивирус</span>
<span class="t" style="left:524.8px;transform-origin:0 0;top:98.0px;transform:scaleX(1.0027)">Комментарий</span>
<span class="t" style="left:613.6px;transform-origin:0 0;top:98.0px;transform:scaleX(0.9542)">Защита</span>
<span class="t" style="left:679.6px;transform-origin:0 0;top:98.0px;transform:scaleX(0.7625)">SFX</span>
<span class="t" style="left:7.4px;transform-origin:0 0;top:125.8px;transform:scaleX(0.9645)">MORDOR.rar - непрерывный RAR 4.x архив,</span>
<span class="t" style="left:249.0px;transform-origin:0 0;top:125.8px;transform:scaleX(0.9683)">размер исходных файлов</span>
<span class="t" style="left:393.3px;transform-origin:0 0;top:125.8px;transform:scaleX(0.9233)">2 760 282 байт</span>
<span class="t" style="right:375.2px;transform-origin:100% 0;top:153.8px;transform:scaleX(0.9624)">Размер</span>
<span class="t" style="right:295.5px;transform-origin:100% 0;top:153.8px;transform:scaleX(0.9489)">Сжат</span>
<span class="t" style="left:455.8px;transform-origin:0 0;top:153.8px;transform:scaleX(0.9343)">Тип</span>
<span class="t" style="left:575.6px;transform-origin:0 0;top:153.8px;transform:scaleX(0.9595)">Изменён</span>
<span class="t" style="left:671.2px;transform-origin:0 0;top:153.8px;transform:scaleX(0.8842)">CRC32</span>
<span class="t" style="left:455.8px;transform-origin:0 0;top:175.8px;color:#fff;transform:scaleX(0.9743)">Папка с файлами</span>
<span class="t" style="right:375.2px;transform-origin:100% 0;top:194.8px;transform:scaleX(0.8991)">20 330</span>
<span class="t" style="right:295.8px;transform-origin:100% 0;top:194.8px;transform:scaleX(0.9215)">19 112</span>
<span class="t" style="left:455.8px;transform-origin:0 0;top:194.8px;transform:scaleX(0.9531)">Файл "DL_"</span>
<span class="t" style="left:575.6px;transform-origin:0 0;top:194.8px;transform:scaleX(0.8991)">14.06.1993 20:25</span>
<span class="t" style="left:671.2px;transform-origin:0 0;top:194.8px;transform:scaleX(0.9143)">66641511</span>
<span class="t" style="right:375.2px;transform-origin:100% 0;top:213.8px;transform:scaleX(0.8991)">20 357</span>
<span class="t" style="right:295.8px;transform-origin:100% 0;top:213.8px;transform:scaleX(0.8991)">3 591</span>
<span class="t" style="left:455.8px;transform-origin:0 0;top:213.8px;transform:scaleX(0.9541)">Файл "ANS"</span>
<span class="t" style="left:575.6px;transform-origin:0 0;top:213.8px;transform:scaleX(0.8991)">16.09.1995 8:21</span>
<span class="t" style="left:671.2px;transform-origin:0 0;top:213.8px;transform:scaleX(0.8858)">10B13DFB</span>
<span class="t" style="right:375.2px;transform-origin:100% 0;top:232.8px;transform:scaleX(0.8988)">171 300</span>
<span class="t" style="right:295.8px;transform-origin:100% 0;top:232.8px;transform:scaleX(0.8988)">161 730</span>
<span class="t" style="left:455.8px;transform-origin:0 0;top:232.8px;transform:scaleX(0.9655)">Файл "MD_"</span>
<span class="t" style="left:575.6px;transform-origin:0 0;top:232.8px;transform:scaleX(0.8991)">28.07.1995 16:30</span>
<span class="t" style="left:671.2px;transform-origin:0 0;top:232.8px;transform:scaleX(0.8562)">E0643E04</span>
<span class="t" style="right:375.2px;transform-origin:100% 0;top:251.8px;transform:scaleX(0.8990)">1 308 706</span>
<span class="t" style="right:295.8px;transform-origin:100% 0;top:251.8px;transform:scaleX(0.8990)">1 309 870</span>
<span class="t" style="left:455.8px;transform-origin:0 0;top:251.8px;transform:scaleX(0.9636)">Файл "WIP"</span>
<span class="t" style="left:575.6px;transform-origin:0 0;top:251.8px;transform:scaleX(0.8991)">28.07.1995 16:42</span>
<span class="t" style="left:671.2px;transform-origin:0 0;top:251.8px;transform:scaleX(0.9168)">D09475A3</span>
<span class="t" style="right:375.2px;transform-origin:100% 0;top:270.8px;transform:scaleX(0.8986)">231</span>
<span class="t" style="right:295.8px;transform-origin:100% 0;top:270.8px;transform:scaleX(0.8986)">125</span>
<span class="t" style="left:455.8px;transform-origin:0 0;top:270.8px;transform:scaleX(0.9465)">Файл "PPH"</span>
<span class="t" style="left:575.6px;transform-origin:0 0;top:270.8px;transform:scaleX(0.8991)">21.04.1995 14:14</span>
<span class="t" style="left:671.2px;transform-origin:0 0;top:270.8px;transform:scaleX(0.8886)">7EAB9652</span>
<span class="t" style="right:375.2px;transform-origin:100% 0;top:289.8px;transform:scaleX(0.8991)">19 040</span>
<span class="t" style="right:295.8px;transform-origin:100% 0;top:289.8px;transform:scaleX(0.8991)">10 143</span>
<span class="t" style="left:455.8px;transform-origin:0 0;top:289.8px;transform:scaleX(1.0115)">Приложение</span>
<span class="t" style="left:575.6px;transform-origin:0 0;top:289.8px;transform:scaleX(0.9085)">11.06.1995 0:16</span>
<span class="t" style="left:671.2px;transform-origin:0 0;top:289.8px;transform:scaleX(0.8788)">660C59DF</span>
<span class="t" style="right:375.2px;transform-origin:100% 0;top:308.8px;transform:scaleX(0.8982)">67</span>
<span class="t" style="right:295.8px;transform-origin:100% 0;top:308.8px;transform:scaleX(0.8982)">61</span>
<span class="t" style="left:455.8px;transform-origin:0 0;top:308.8px;transform:scaleX(0.9436)">Файл "LST"</span>
<span class="t" style="left:575.6px;transform-origin:0 0;top:308.8px;transform:scaleX(0.8991)">26.04.1995 1:49</span>
<span class="t" style="left:671.2px;transform-origin:0 0;top:308.8px;transform:scaleX(0.8671)">FF012F52</span>
<span class="t" style="right:375.2px;transform-origin:100% 0;top:327.8px;transform:scaleX(0.8991)">41 755</span>
<span class="t" style="right:295.8px;transform-origin:100% 0;top:327.8px;transform:scaleX(0.8991)">38 907</span>
<span class="t" style="left:455.8px;transform-origin:0 0;top:327.8px;transform:scaleX(0.9337)">Файл "EX_"</span>
<span class="t" style="left:575.6px;transform-origin:0 0;top:327.8px;transform:scaleX(0.8991)">28.07.1995 16:41</span>
<span class="t" style="left:671.2px;transform-origin:0 0;top:327.8px;transform:scaleX(0.8770)">4E075657</span>
<span class="t" style="right:375.2px;transform-origin:100% 0;top:346.8px;transform:scaleX(0.8991)">3 657</span>
<span class="t" style="right:295.8px;transform-origin:100% 0;top:346.8px;transform:scaleX(0.8991)">2 905</span>
<span class="t" style="left:455.8px;transform-origin:0 0;top:346.8px;transform:scaleX(0.9531)">Файл "DL_"</span>
<span class="t" style="left:575.6px;transform-origin:0 0;top:346.8px;transform:scaleX(0.8991)">28.04.1993 0:00</span>
<span class="t" style="left:671.2px;transform-origin:0 0;top:346.8px;transform:scaleX(0.9100)">5B986FA5</span>
<span class="t" style="right:375.2px;transform-origin:100% 0;top:365.8px;transform:scaleX(0.8991)">32 676</span>
<span class="t" style="right:295.8px;transform-origin:100% 0;top:365.8px;transform:scaleX(0.8991)">30 476</span>
<span class="t" style="left:455.8px;transform-origin:0 0;top:365.8px;transform:scaleX(0.9337)">Файл "EX_"</span>
<span class="t" style="left:575.6px;transform-origin:0 0;top:365.8px;transform:scaleX(0.8991)">19.03.1995 14:16</span>
<span class="t" style="left:671.2px;transform-origin:0 0;top:365.8px;transform:scaleX(0.8496)">F85C5CC7</span>
<span class="t" style="right:375.2px;transform-origin:100% 0;top:384.8px;transform:scaleX(0.8991)">32 324</span>
<span class="t" style="right:295.8px;transform-origin:100% 0;top:384.8px;transform:scaleX(0.8991)">25 804</span>
<span class="t" style="left:455.8px;transform-origin:0 0;top:384.8px;transform:scaleX(0.9337)">Файл "VB_"</span>
<span class="t" style="left:575.6px;transform-origin:0 0;top:384.8px;transform:scaleX(0.8991)">15.02.1995 0:00</span>
<span class="t" style="left:671.2px;transform-origin:0 0;top:384.8px;transform:scaleX(0.8926)">E019A8DB</span>
<span class="t" style="right:375.2px;transform-origin:100% 0;top:403.8px;transform:scaleX(0.8988)">276 684</span>
<span class="t" style="right:295.8px;transform-origin:100% 0;top:403.8px;transform:scaleX(0.8988)">259 745</span>
<span class="t" style="left:455.8px;transform-origin:0 0;top:403.8px;transform:scaleX(0.9531)">Файл "DL_"</span>
<span class="t" style="left:575.6px;transform-origin:0 0;top:403.8px;transform:scaleX(0.9078)">01.12.1994 11:58</span>
<span class="t" style="left:671.2px;transform-origin:0 0;top:403.8px;transform:scaleX(0.9027)">4154D890</span>
<span class="t" style="right:375.2px;transform-origin:100% 0;top:422.8px;transform:scaleX(0.8991)">9 696</span>
<span class="t" style="right:295.8px;transform-origin:100% 0;top:422.8px;transform:scaleX(0.8991)">5 123</span>
<span class="t" style="left:455.8px;transform-origin:0 0;top:422.8px;transform:scaleX(0.9531)">Файл "DL_"</span>
<span class="t" style="left:575.6px;transform-origin:0 0;top:422.8px;transform:scaleX(0.9180)">01.11.1993 3:11</span>
<span class="t" style="left:671.2px;transform-origin:0 0;top:422.8px;transform:scaleX(0.9174)">986D1161</span>
<span class="t" style="right:375.2px;transform-origin:100% 0;top:441.8px;transform:scaleX(0.8988)">823 459</span>
<span class="t" style="right:295.8px;transform-origin:100% 0;top:441.8px;transform:scaleX(0.8988)">822 222</span>
<span class="t" style="left:455.8px;transform-origin:0 0;top:441.8px;transform:scaleX(0.9636)">Файл "WIP"</span>
<span class="t" style="left:575.6px;transform-origin:0 0;top:441.8px;transform:scaleX(0.8991)">28.07.1995 16:42</span>
<span class="t" style="left:671.2px;transform-origin:0 0;top:441.8px;transform:scaleX(0.8815)">E96357D3</span>
<span class="t" style="right:732.0px;transform-origin:100% 0;top:194.0px;transform:scaleX(0.9300)">DL_</span>
<span class="t" style="right:734.1px;transform-origin:100% 0;top:213.8px;transform:scaleX(0.9300)">ANS</span>
<span class="t" style="right:735.9px;transform-origin:100% 0;top:232.0px;transform:scaleX(0.9300)">MD_</span>
<span class="t" style="right:735.9px;transform-origin:100% 0;top:403.0px;transform:scaleX(0.9300)">DL_</span>
<span class="t" style="left:358.4px;transform-origin:0 0;top:691.8px;transform:scaleX(0.9396)">Всего: 14 файл(а,ов), 2 760 282 байт</span>
</div>
</body>
</html>
